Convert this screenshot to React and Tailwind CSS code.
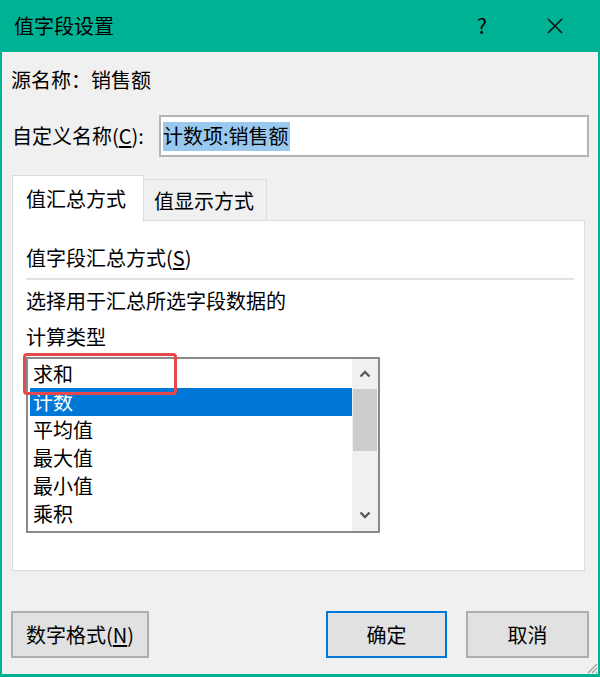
import React from 'react';

const FONT = { fontFamily: '"Noto Sans CJK SC", "Noto Sans", sans-serif' };

const ITEMS = ['求和', '计数', '平均值', '最大值', '最小值', '乘积'];

function Chevron({ down }) {
  return (
    <svg width="12" height="8" viewBox="0 0 12 8" className="block">
      <path
        d={down ? 'M1.5 1.5 L6 6 L10.5 1.5' : 'M1.5 6.5 L6 2 L10.5 6.5'}
        fill="none"
        stroke="#5a5a5a"
        strokeWidth="2.4"
      />
    </svg>
  );
}

function Button({ children, primary, className = '' }) {
  return (
    <div
      className={`flex h-[47px] items-center justify-center bg-[#e1e1e1] text-black ${
        primary ? 'border-2 border-[#0078d7]' : 'border-2 border-[#adadad]'
      } ${className}`}
    >
      {children}
    </div>
  );
}

export default function App() {
  return (
    <div style={FONT} className="flex h-[677px] w-[600px] flex-col bg-[#00b294] px-[2px] pb-[3px]">
      {/* title bar */}
      <div className="flex h-[52px] shrink-0 items-center">
        <span className="pl-[12px] text-[20px] text-black">值字段设置</span>
        <span className="ml-auto text-[21px] text-black">?</span>
        <svg width="16" height="16" viewBox="0 0 16 16" className="ml-[60px] mr-[35px]">
          <path d="M1 1 L15 15 M15 1 L1 15" stroke="#111" strokeWidth="1.6" />
        </svg>
      </div>

      <div className="relative flex flex-1 flex-col bg-[#f0f0f0] px-[8px] text-[20px] leading-none text-black">
        {/* source name */}
        <div className="mt-[17px] flex h-[22px] items-center pl-[1px]">
          <span>源名称：</span>
          <span>销售额</span>
        </div>

        {/* custom name */}
        <div className="mt-[24px] flex h-[42px] items-center">
          <span className="w-[149px] pl-[2px]">
            自定义名称(<span className="underline underline-offset-2">C</span>):
          </span>
          <div className="mr-[1px] flex h-full flex-1 items-center border-2 border-[#b4b4b4] bg-white pl-[2px]">
            <span className="flex h-[29px] items-center bg-[#99c9ef] pr-[1px]">计数项:销售额</span>
          </div>
        </div>

        {/* tabs */}
        <div className="ml-[2px] mt-[18px] flex items-start">
          <div className="relative z-10 flex h-[47px] w-[132px] items-center border border-b-0 border-[#dcdcdc] bg-white pl-[13px]">
            值汇总方式
          </div>
          <div className="mt-[4px] flex h-[42px] w-[123px] items-center border border-b-0 border-l-0 border-[#dcdcdc] bg-[#f0f0f0] pl-[10px]">
            值显示方式
          </div>
        </div>

        <div className="-mt-[2px] ml-[2px] mr-[5px] flex h-[351px] flex-col border border-[#dcdcdc] bg-white pl-[13px]">
          <div className="mt-[26px] flex h-[22px] items-center">
            值字段汇总方式(<span className="underline underline-offset-2">S</span>)
          </div>
          <div className="mr-[10px] mt-[9px] h-[2px] bg-[#e3e3e3]" />
          <div className="mt-[10px] flex h-[22px] items-center">选择用于汇总所选字段数据的</div>
          <div className="mt-[14px] flex h-[22px] items-center">计算类型</div>

          {/* list box */}
          <div className="mt-[9px] flex h-[176px] w-[354px] border-2 border-[#8a8a8a] bg-white">
            <div className="flex-1 pl-[2px] pt-[1px]">
              {ITEMS.map((it) => (
                <div
                  key={it}
                  className={`flex h-[28px] items-center pl-[3px] ${
                    it === '计数' ? 'bg-[#0078d7] text-white' : ''
                  }`}
                >
                  {it}
                </div>
              ))}
            </div>
            <div className="flex w-[26px] flex-col bg-[#f0f0f0]">
              <div className="flex h-[30px] items-center justify-center">
                <Chevron />
              </div>
              <div className="mx-[1px] h-[62px] bg-[#cdcdcd]" />
              <div className="flex flex-1 items-end justify-center pb-[12px]">
                <Chevron down />
              </div>
            </div>
          </div>
        </div>

        {/* annotation box */}
        <div className="absolute left-[21px] top-[301px] h-[42px] w-[154px] rounded-[4px] border-[3px] border-[#e8474b]" />

        {/* buttons */}
        <div className="mt-[40px] flex">
          <Button className="ml-[1px] w-[138px]">
            数字格式(<span className="underline underline-offset-2">N</span>)
          </Button>
          <Button primary className="ml-auto w-[121px]">确定</Button>
          <Button className="ml-[19px] mr-[1px] w-[123px]">取消</Button>
        </div>

        {/* resize grip */}
        <svg width="13" height="13" viewBox="0 0 13 13" className="absolute bottom-0 right-0">
          <path d="M12 3 L3 12 M12 7 L7 12 M12 11 L11 12" stroke="#a0a0a0" strokeWidth="1.2" />
        </svg>
      </div>
    </div>
  );
}
